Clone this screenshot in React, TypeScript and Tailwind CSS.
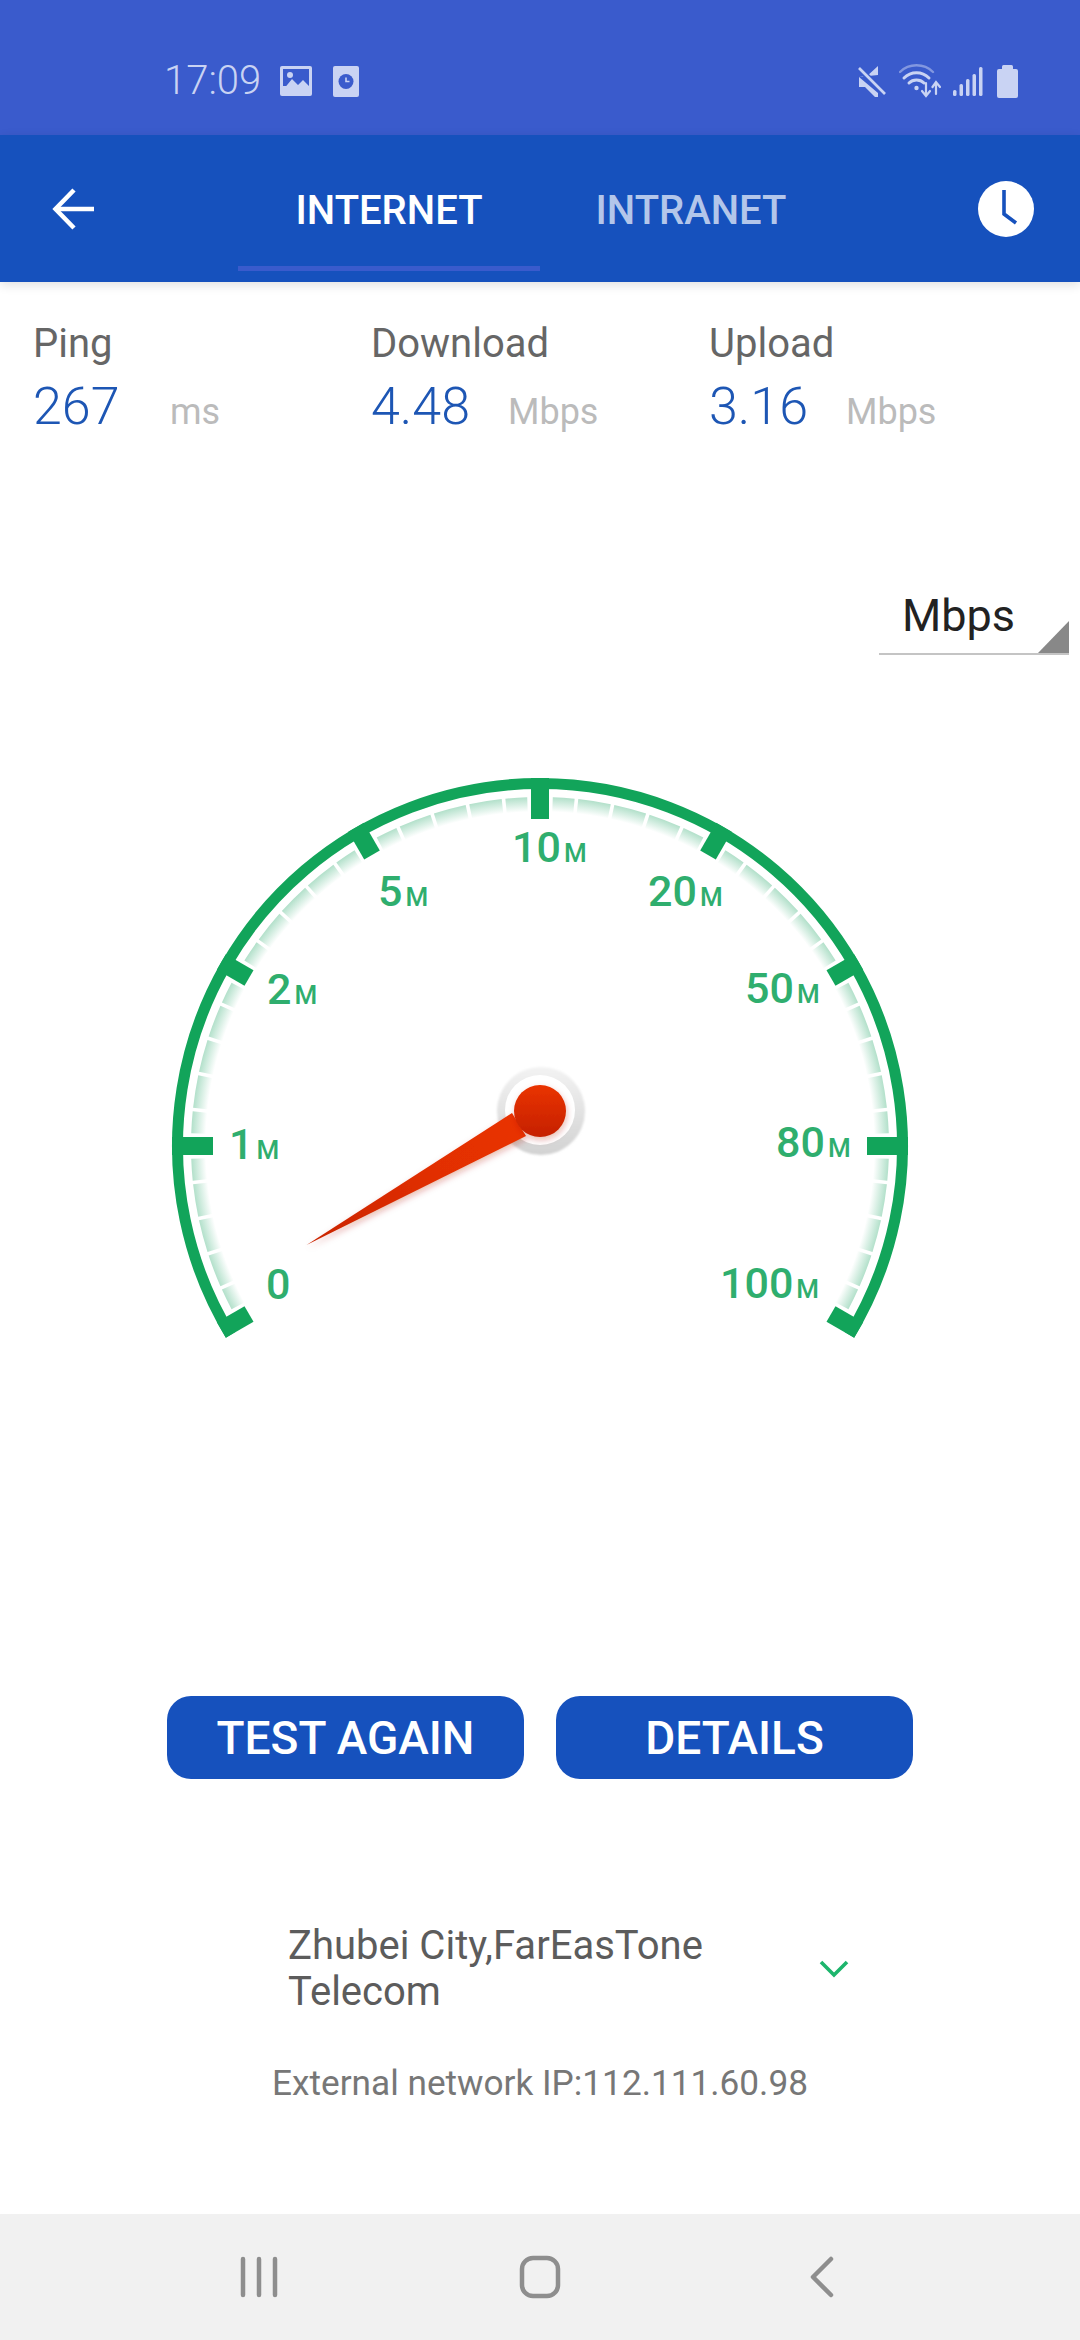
import React from 'react';

const CX = 540;
const CY = 1146;

const polar = (r: number, deg: number) => {
    const a = (deg * Math.PI) / 180;
    return { x: CX + r * Math.sin(a), y: CY - r * Math.cos(a) };
};

const arcPath = (r: number, from: number, to: number) => {
    const a = polar(r, from);
    const b = polar(r, to);
    const large = to - from > 180 ? 1 : 0;
    return `M${a.x} ${a.y} A${r} ${r} 0 ${large} 1 ${b.x} ${b.y}`;
};

const dashPath = (from: number, to: number) => {
    const a = polar(349, from);
    const b = polar(349, to);
    const c = polar(333, to);
    const d = polar(333, from);
    return `M${a.x} ${a.y} A349 349 0 0 1 ${b.x} ${b.y} L${c.x} ${c.y} A333 333 0 0 0 ${d.x} ${d.y} Z`;
};

// the level and upright ticks reach further in than the slanted ones
const TICKS = [
    { deg: -120, inner: 336 },
    { deg: -90, inner: 327 },
    { deg: -60, inner: 336 },
    { deg: -30, inner: 336 },
    { deg: 0, inner: 327 },
    { deg: 30, inner: 336 },
    { deg: 60, inner: 336 },
    { deg: 90, inner: 327 },
    { deg: 120, inner: 336 },
];

const LABELS = [
    { n: '0', m: false, x: 266, y: 1299 },
    { n: '1', m: true, x: 229, y: 1159 },
    { n: '2', m: true, x: 267, y: 1004 },
    { n: '5', m: true, x: 378, y: 906 },
    { n: '10', m: true, x: 512, y: 862 },
    { n: '20', m: true, x: 648, y: 906 },
    { n: '50', m: true, x: 745, y: 1003 },
    { n: '80', m: true, x: 776, y: 1157 },
    { n: '100', m: true, x: 720, y: 1298 },
];

const Gauge = () => {
    const dashes: string[] = [];
    for (let t = -120; t < 120; t += 30) {
        for (let i = 0; i < 5; i++) {
            const from = t + i * 6;
            dashes.push(dashPath(from + (i === 0 ? 2.1 : 0.3), from + 6 - (i === 4 ? 2.1 : 0.3)));
        }
    }
    return (
        <svg viewBox="0 770 1080 580" className="block w-[1080px] h-[580px] mt-[114.5px]">
            <defs>
                <radialGradient id="dash" gradientUnits="userSpaceOnUse" cx={CX} cy={CY} r="349">
                    <stop offset="0.958" stopColor="#ffffff" />
                    <stop offset="1" stopColor="#b2e0ca" />
                </radialGradient>
                <linearGradient id="hub" x1="0" y1="0" x2="0" y2="1">
                    <stop offset="0" stopColor="#ea3300" />
                    <stop offset="1" stopColor="#c52103" />
                </linearGradient>
                <linearGradient id="needle" gradientUnits="userSpaceOnUse" x1="520" y1="1120" x2="306" y2="1245">
                    <stop offset="0" stopColor="#e93100" />
                    <stop offset="0.4" stopColor="#e22f00" />
                    <stop offset="1" stopColor="#c92404" />
                </linearGradient>
                <linearGradient id="ring" x1="0" y1="0" x2="0" y2="1">
                    <stop offset="0" stopColor="#f3f3f3" />
                    <stop offset="1" stopColor="#d2d2d2" />
                </linearGradient>
                <filter id="soft" x="-20%" y="-20%" width="140%" height="140%">
                    <feDropShadow dx="1" dy="3" stdDeviation="3" floodColor="#b02000" floodOpacity="0.3" />
                </filter>
                <filter id="blur1" x="-10%" y="-10%" width="120%" height="120%">
                    <feGaussianBlur stdDeviation="1.2" />
                </filter>
            </defs>
            {dashes.map((d, i) => (
                <path key={i} d={d} fill="url(#dash)" />
            ))}
            <path d={arcPath(362.5, -121.4, 121.4)} fill="none" stroke="#12a45a" strokeWidth="11" />
            {TICKS.map((t) => {
                const a = polar(368, t.deg);
                const b = polar(t.inner, t.deg);
                return <line key={t.deg} x1={a.x} y1={a.y} x2={b.x} y2={b.y} stroke="#12a45a" strokeWidth="18" />;
            })}
            {LABELS.map((l) => (
                <text key={l.n} x={l.x} y={l.y} fill="#2fae6e" fontSize="43" fontWeight="500">
                    {l.n}
                    {l.m && <tspan fontSize="26" dx="3">M</tspan>}
                </text>
            ))}
            <circle cx="541" cy="1111" r="44" fill="url(#ring)" filter="url(#blur1)" />
            <circle cx="540" cy="1110" r="35" fill="#ffffff" />
            <polygon points="306.5,1245 512,1113 526,1136" fill="url(#needle)" filter="url(#soft)" />
            <circle cx="540" cy="1111" r="26" fill="url(#hub)" filter="url(#soft)" />
        </svg>
    );
};

const StatusBar = () => (
    <div className="h-[135px] bg-[#3a5bcc] flex items-center pt-[27px] pl-[164px] pr-[62px] text-[#c9d3f3]">
        <span className="text-[40px] leading-none font-light">17:09</span>
        <svg viewBox="0 0 32 30" className="w-[32px] h-[30px] ml-[19px]">
            <rect width="32" height="30" rx="2" fill="currentColor" />
            <rect x="3" y="3" width="26" height="17" fill="#3a5bcc" />
            <circle cx="10" cy="9" r="3" fill="currentColor" />
            <path d="M3 24 L12 13 L18 19 L23 14 L29 20 V24 Z" fill="currentColor" />
        </svg>
        <svg viewBox="0 0 26 31" className="w-[26px] h-[31px] ml-[21px]">
            <rect width="26" height="31" rx="2" fill="currentColor" />
            <circle cx="13" cy="15.5" r="7.5" fill="#3a5bcc" />
            <path d="M13 11.5 V15.5 H16.5" stroke="#c9d3f3" strokeWidth="1.6" fill="none" />
        </svg>
        <div className="ml-auto flex items-center">
            <svg viewBox="0 0 30 32" className="w-[30px] h-[32px]">
                <path d="M2 12 H9 L21 1 V10 L2 12 Z M2 12 V22 H8 L18 32 H21 V28 Z" fill="currentColor" />
                <path d="M1 2 L28 30" stroke="#3a5bcc" strokeWidth="6" />
                <path d="M2 3 L28 29" stroke="currentColor" strokeWidth="2.6" />
            </svg>
            <svg viewBox="0 0 42 34" className="w-[42px] h-[34px] ml-[12px]" fill="none" stroke="currentColor" strokeLinecap="round">
                <path d="M1 8 C10 -1 25 -1 34 8" strokeWidth="2.4" opacity="0.5" />
                <path d="M5 14 C12 7 23 7 30 14" strokeWidth="3" />
                <path d="M10 19 C14 15 21 15 25 19" strokeWidth="3" />
                <circle cx="17.5" cy="24" r="2.2" fill="currentColor" stroke="none" />
                <path d="M27 19 V31 M23 27 L27 32 L31 27" strokeWidth="2.2" />
                <path d="M37 30 V19 M33.5 23 L37 18 L41 23" strokeWidth="2.2" />
            </svg>
            <svg viewBox="0 0 30 29" className="w-[30px] h-[29px] ml-[12px]" fill="currentColor">
                <rect x="0" y="23" width="3.5" height="6" rx="1.5" />
                <rect x="6.5" y="17" width="3.5" height="12" rx="1.5" />
                <rect x="13" y="12" width="3.5" height="17" rx="1.5" />
                <rect x="19.5" y="7" width="3.5" height="22" rx="1.5" />
                <rect x="26" y="0" width="3.5" height="29" rx="1.5" />
            </svg>
            <svg viewBox="0 0 21 33" className="w-[21px] h-[33px] ml-[14px]" fill="currentColor">
                <rect x="5" y="0" width="11" height="6" rx="1.5" />
                <rect x="0" y="4" width="21" height="29" rx="2" />
            </svg>
        </div>
    </div>
);

const Header = () => (
    <div className="h-[147px] bg-[#1651bd] flex relative shadow-[0_3px_10px_rgba(0,0,0,0.12)]">
        <div className="w-[238px] flex items-center pl-[52px]">
            <svg viewBox="0 0 42 42" className="w-[42px] h-[42px]" fill="none" stroke="#ffffff" strokeWidth="4.5">
                <path d="M42 21 H4" />
                <path d="M22 2 L3.5 21 L22 40" />
            </svg>
        </div>
        <div className="w-[302px] h-[136px] pt-[20px] border-b-[5px] border-[#3a5bcc] flex items-center justify-center text-white text-[40px] font-medium">
            INTERNET
        </div>
        <div className="w-[302px] h-[136px] pt-[20px] pb-[5px] flex items-center justify-center text-[#b3c6ea] text-[40px] font-medium">
            INTRANET
        </div>
        <div className="ml-[136px] flex items-center">
            <svg viewBox="0 0 56 56" className="w-[56px] h-[56px]">
                <circle cx="28" cy="28" r="28" fill="#ffffff" />
                <path d="M26 9 V33 L38 42" fill="none" stroke="#1651bd" strokeWidth="3.6" />
            </svg>
        </div>
    </div>
);

const Stat = ({ label, value, unit }: { label: string; value: string; unit: string }) => (
    <div className="w-[338px]">
        <div className="text-[40px] leading-[42px] text-[#666666]">{label}</div>
        <div className="flex items-baseline mt-[17px] leading-[50px]">
            <span className="w-[137px] text-[52px] font-light text-[#1d56b4]">{value}</span>
            <span className="text-[36px] text-[#bbbbbb]">{unit}</span>
        </div>
    </div>
);

const NavBar = () => (
    <div className="mt-auto h-[126px] bg-[#f1f1f1] flex justify-center items-center text-[#8e8e8e]">
        <div className="w-[282px] flex justify-center">
            <svg viewBox="0 0 40 42" className="w-[40px] h-[42px] ml-[2px]" fill="none" stroke="currentColor" strokeWidth="4.5" strokeLinecap="round">
                <path d="M4 3 V39 M20 3 V39 M36 3 V39" />
            </svg>
        </div>
        <div className="w-[282px] flex justify-center">
            <svg viewBox="0 0 42 44" className="w-[42px] h-[44px]" fill="none" stroke="currentColor" strokeWidth="4.5">
                <rect x="3" y="3" width="36" height="38" rx="11" />
            </svg>
        </div>
        <div className="w-[282px] flex justify-center">
            <svg viewBox="0 0 26 42" className="w-[26px] h-[42px]" fill="none" stroke="currentColor" strokeWidth="4.5" strokeLinecap="round" strokeLinejoin="round">
                <path d="M22 3 L4 21 L22 39" />
            </svg>
        </div>
    </div>
);

export default function App() {
    return (
        <div className="w-[1080px] h-[2340px] bg-white flex flex-col font-['Roboto',sans-serif] overflow-hidden">
            <StatusBar />
            <Header />
            <div className="flex pl-[33px] pt-[41px]">
                <Stat label="Ping" value="267" unit="ms" />
                <Stat label="Download" value="4.48" unit="Mbps" />
                <Stat label="Upload" value="3.16" unit="Mbps" />
            </div>
            <div className="relative w-[190px] h-[64px] ml-[879px] mt-[154px] pb-[13px] border-b-2 border-[#c4c4c4] flex items-center pl-[23px] text-[45px] text-[#222222]">
                Mbps
                <svg viewBox="0 0 31 32" className="absolute right-0 bottom-0 w-[31px] h-[32px]">
                    <polygon points="31,0 31,32 0,32" fill="#888888" />
                </svg>
            </div>
            <Gauge />
            <div className="flex justify-center gap-[32px] mt-[346px]">
                <button className="w-[357px] h-[83px] pt-[3px] rounded-[24px] bg-[#1651bd] text-white text-[46px] font-medium">TEST AGAIN</button>
                <button className="w-[357px] h-[83px] pt-[3px] rounded-[24px] bg-[#1651bd] text-white text-[46px] font-medium">DETAILS</button>
            </div>
            <div className="flex items-center pl-[288px] mt-[144px]">
                <div className="w-[500px] text-[40px] leading-[46px] text-[#5c5c5c]">
                    Zhubei City,FarEasTone
                    <br />
                    Telecom
                </div>
                <svg viewBox="0 0 30 18" className="w-[30px] h-[18px] ml-[31px]" fill="none" stroke="#1db56c" strokeWidth="3.6">
                    <path d="M2 2 L15 15 L28 2" />
                </svg>
            </div>
            <div className="mt-[48px] text-center text-[35.2px] leading-[40px] text-[#777777]">External network IP:112.111.60.98</div>
            <NavBar />
        </div>
    );
}
